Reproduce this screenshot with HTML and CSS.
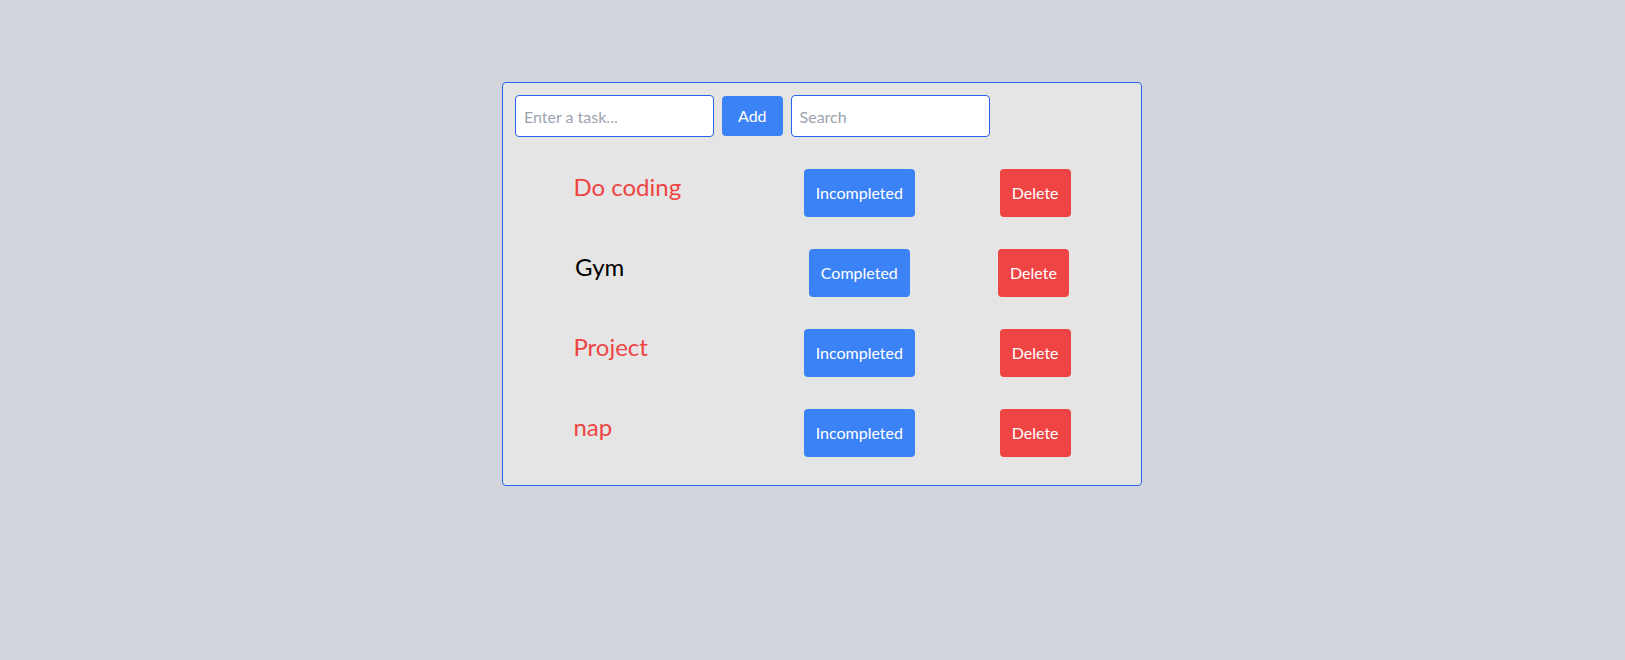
FILE: index.html
```html
<!DOCTYPE html>
<html lang="en">
<head>
<meta charset="utf-8">
<title>Todo</title>
<link rel="stylesheet" href="styles.css">
</head>
<body>
<div class="page">
  <div class="card">
    <div class="toolbar">
      <input class="field" type="text" placeholder="Enter a task...">
      <button class="btn btn-add">Add</button>
      <input class="field" type="text" placeholder="Search">
    </div>
    <div class="list">
      <div class="row">
        <p class="task pending">Do coding</p>
        <button class="btn btn-status">Incompleted</button>
        <button class="btn btn-delete">Delete</button>
      </div>
      <div class="row">
        <p class="task done">Gym</p>
        <button class="btn btn-status">Completed</button>
        <button class="btn btn-delete">Delete</button>
      </div>
      <div class="row">
        <p class="task pending">Project</p>
        <button class="btn btn-status">Incompleted</button>
        <button class="btn btn-delete">Delete</button>
      </div>
      <div class="row">
        <p class="task pending">nap</p>
        <button class="btn btn-status">Incompleted</button>
        <button class="btn btn-delete">Delete</button>
      </div>
    </div>
  </div>
</div>
</body>
</html>
```

FILE: styles.css
```css
* {
  box-sizing: border-box;
}

html, body {
  margin: 0;
  padding: 0;
}

body {
  background: #d1d5db;
  font-family: "Lato", "Open Sans", sans-serif;
  font-size: 16px;
  line-height: 24px;
  min-height: 100vh;
}

.page {
  display: flex;
  justify-content: center;
  padding-top: 82px;
  padding-left: 19px;
}

.card {
  width: 640px;
  background: #e5e5e5;
  border: 1px solid #2563eb;
  border-radius: 4px;
  padding: 12px;
}

.toolbar {
  display: flex;
  align-items: center;
  gap: 8px;
}

.field {
  width: 199px;
  height: 42px;
  padding: 8px;
  border: 1px solid #2563eb;
  border-radius: 4px;
  background: #ffffff;
  font-family: inherit;
  font-size: 16px;
  line-height: 24px;
  color: #111827;
  outline: none;
}

.field::placeholder {
  color: #9ca3af;
}

.btn {
  border: none;
  border-radius: 4px;
  color: #ffffff;
  font-family: inherit;
  font-size: 16px;
  line-height: 24px;
  cursor: pointer;
}

.btn-add {
  background: #3b82f6;
  padding: 8px 16px;
}

.list {
  margin-top: 16px;
}

.row {
  display: flex;
  justify-content: space-around;
  padding: 16px;
}

.task {
  width: 25%;
  margin: 0;
  padding-top: 2px;
  font-size: 24px;
  line-height: 32px;
}

.pending {
  color: #ef4444;
}

.done {
  color: #000000;
}

.btn-status {
  background: #3b82f6;
  padding: 12px;
}

.btn-delete {
  background: #ef4444;
  padding: 12px;
}
```
